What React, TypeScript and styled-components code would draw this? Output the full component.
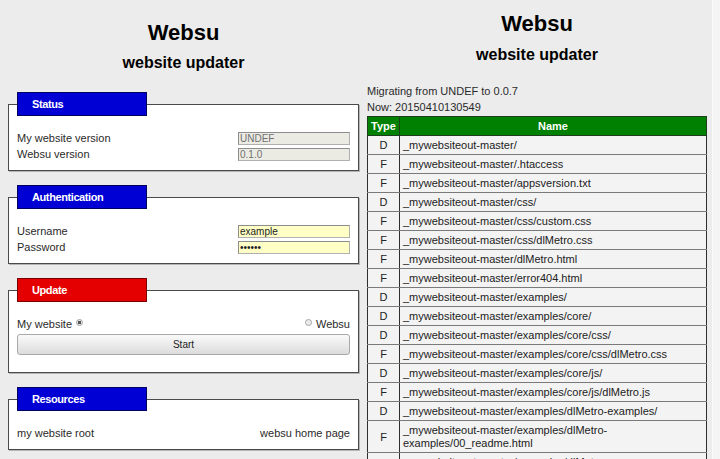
import React from "react";
import styled, { createGlobalStyle } from "styled-components";

const GlobalStyle = createGlobalStyle`
  html, body {
    margin: 0;
    padding: 0;
    overflow: hidden;
    background: #ececec;
  }
  body {
    font-family: "Liberation Sans", Arial, sans-serif;
    color: #222;
  }
`;

interface FileEntry {
  type: "D" | "F";
  name: string;
}

const files: FileEntry[] = [
  { type: "D", name: "_mywebsiteout-master/" },
  { type: "F", name: "_mywebsiteout-master/.htaccess" },
  { type: "F", name: "_mywebsiteout-master/appsversion.txt" },
  { type: "D", name: "_mywebsiteout-master/css/" },
  { type: "F", name: "_mywebsiteout-master/css/custom.css" },
  { type: "F", name: "_mywebsiteout-master/css/dlMetro.css" },
  { type: "F", name: "_mywebsiteout-master/dlMetro.html" },
  { type: "F", name: "_mywebsiteout-master/error404.html" },
  { type: "D", name: "_mywebsiteout-master/examples/" },
  { type: "D", name: "_mywebsiteout-master/examples/core/" },
  { type: "D", name: "_mywebsiteout-master/examples/core/css/" },
  { type: "F", name: "_mywebsiteout-master/examples/core/css/dlMetro.css" },
  { type: "D", name: "_mywebsiteout-master/examples/core/js/" },
  { type: "F", name: "_mywebsiteout-master/examples/core/js/dlMetro.js" },
  { type: "D", name: "_mywebsiteout-master/examples/dlMetro-examples/" },
  { type: "F", name: "_mywebsiteout-master/examples/dlMetro-examples/00_readme.html" },
  { type: "F", name: "_mywebsiteout-master/examples/dlMetro-examples/dlMetro.html" },
];

const App = () => {
  return (
    <>
      <GlobalStyle />
      <Page>
        <LeftPanel>
          <Title>Websu</Title>
          <Subtitle $gap="7px">website updater</Subtitle>

          <Group $first>
            <Legend>Status</Legend>
            <Row>
              <span>My website version</span>
              <Field $tone="disabled" value="UNDEF" disabled readOnly />
            </Row>
            <Row>
              <span>Websu version</span>
              <Field $tone="disabled" value="0.1.0" disabled readOnly />
            </Row>
          </Group>

          <Group>
            <Legend>Authentication</Legend>
            <Row>
              <span>Username</span>
              <Field $tone="edit" value="example" readOnly />
            </Row>
            <Row>
              <span>Password</span>
              <Field $tone="edit" type="password" value="secret" readOnly />
            </Row>
          </Group>

          <Group>
            <Legend $red>Update</Legend>
            <Row>
              <RadioLabel>
                My website <Radio type="radio" name="target" defaultChecked />
              </RadioLabel>
              <RadioLabel>
                <Radio type="radio" name="target" /> Websu
              </RadioLabel>
            </Row>
            <StartButton>Start</StartButton>
          </Group>

          <Group>
            <Legend>Resources</Legend>
            <Row>
              <span>my website root</span>
              <span>websu home page</span>
            </Row>
          </Group>
        </LeftPanel>

        <RightPanel>
          <Title>Websu</Title>
          <Subtitle $gap="8px">website updater</Subtitle>

          <Info>
            Migrating from UNDEF to 0.0.7
            <br />
            Now: 20150410130549
          </Info>

          <FileTable>
            <thead>
              <tr>
                <TypeHead>Type</TypeHead>
                <NameHead>Name</NameHead>
              </tr>
            </thead>
            <tbody>
              {files.map((file) => (
                <tr key={file.name}>
                  <TypeCell>{file.type}</TypeCell>
                  <NameCell>{file.name}</NameCell>
                </tr>
              ))}
            </tbody>
          </FileTable>
        </RightPanel>

        <EdgeStrip />
      </Page>
    </>
  );
};

export default App;

const Page = styled.div`
  display: flex;
  width: 720px;
  height: 459px;
  overflow: hidden;
`;

const LeftPanel = styled.div`
  flex-shrink: 0;
  width: 359px;
  box-sizing: border-box;
  padding: 20px 0 0 8px;
`;

const RightPanel = styled.div`
  flex-shrink: 0;
  width: 353px;
  box-sizing: border-box;
  padding: 11px 5px 0 8px;
`;

const EdgeStrip = styled.div`
  flex: 1;
  background: #f4f4f4;
  border-left: 1px solid #fbfbfb;
`;

const Title = styled.h1`
  margin: 0;
  font-size: 22px;
  line-height: 26px;
  font-weight: bold;
  text-align: center;
  color: #000;
`;

const Subtitle = styled.h2<{ $gap: string }>`
  margin: ${(p) => p.$gap} 0 0;
  font-size: 16px;
  line-height: 20px;
  font-weight: bold;
  text-align: center;
  color: #000;
`;

const Group = styled.fieldset<{ $first?: boolean }>`
  margin: ${(p) => (p.$first ? "19px" : "14px")} 0 0;
  padding: 14px 8px 8px;
  min-width: 0;
  border: 1px solid #4a4a4a;
  box-shadow: 1px 1px 0 #b5b5b5;
  background: #fff;
  font-size: 11px;
  color: #2a2a2a;
`;

const Legend = styled.legend<{ $red?: boolean }>`
  box-sizing: border-box;
  width: 130px;
  height: 24px;
  margin: 0;
  padding: 0 0 0 14px;
  line-height: 22px;
  font-size: 11px;
  font-weight: bold;
  letter-spacing: -0.4px;
  color: #fff;
  background: ${(p) => (p.$red ? "#e40000" : "#0000d4")};
  border: 1px solid ${(p) => (p.$red ? "#7a0000" : "#00005e")};
`;

const Row = styled.div`
  display: flex;
  align-items: center;
  justify-content: space-between;
  height: 16px;
`;

const Field = styled.input<{ $tone: "disabled" | "edit" }>`
  box-sizing: border-box;
  width: 112px;
  height: 13px;
  margin: 0;
  padding: 0 1px;
  font-family: "Liberation Sans", Arial, sans-serif;
  font-size: 10px;
  line-height: 11px;
  outline: none;
  border: 1px solid #b0b0b0;
  border-top-color: #8c8c8c;
  border-left-color: #8c8c8c;
  color: ${(p) => (p.$tone === "disabled" ? "#707070" : "#222")};
  background: ${(p) => (p.$tone === "disabled" ? "#ebebe4" : "#ffffc6")};
`;

const RadioLabel = styled.span`
  display: flex;
  align-items: center;
  gap: 4px;
`;

const Radio = styled.input`
  appearance: none;
  box-sizing: border-box;
  width: 7px;
  height: 7px;
  margin: 0 0 3px;
  border: 1px solid #a5a5a5;
  border-radius: 50%;
  background: #ececec;

  &:checked {
    background: radial-gradient(circle, #555 0 1.5px, #e6e6e6 2px);
  }
`;

const StartButton = styled.button`
  display: block;
  box-sizing: border-box;
  width: 100%;
  height: 21px;
  margin: 2px 0 9px;
  padding: 0;
  border: 1px solid #a9a9a9;
  border-radius: 3px;
  background: linear-gradient(#fafafa, #dcdcdc);
  font-family: "Liberation Sans", Arial, sans-serif;
  font-size: 10px;
  color: #222;
`;

const Info = styled.div`
  margin-top: 18px;
  font-size: 11px;
  line-height: 16px;
  color: #2a2a2a;
`;

const FileTable = styled.table`
  width: 100%;
  margin-top: 1px;
  border-collapse: collapse;
  table-layout: fixed;
  border: 1px solid #2e2e2e;
  font-size: 11px;
  line-height: 13px;
`;

const HeadCell = styled.th`
  padding: 3px 3px 2px;
  background: #008000;
  color: #fff;
  font-weight: bold;
  text-align: center;
  border: 1px solid #1d3f1d;
`;

const TypeHead = styled(HeadCell)`
  width: 25px;
`;

const NameHead = styled(HeadCell)``;

const BodyCell = styled.td`
  padding: 3px 3px 2px;
  background: #f3f3f3;
  color: #222;
  border-top: 1px solid #7a7a7a;
  border-bottom: 1px solid #7a7a7a;
  border-left: 1px solid #2e2e2e;
  border-right: 1px solid #2e2e2e;
`;

const TypeCell = styled(BodyCell)`
  text-align: center;
`;

const NameCell = styled(BodyCell)`
  text-align: left;
`;
